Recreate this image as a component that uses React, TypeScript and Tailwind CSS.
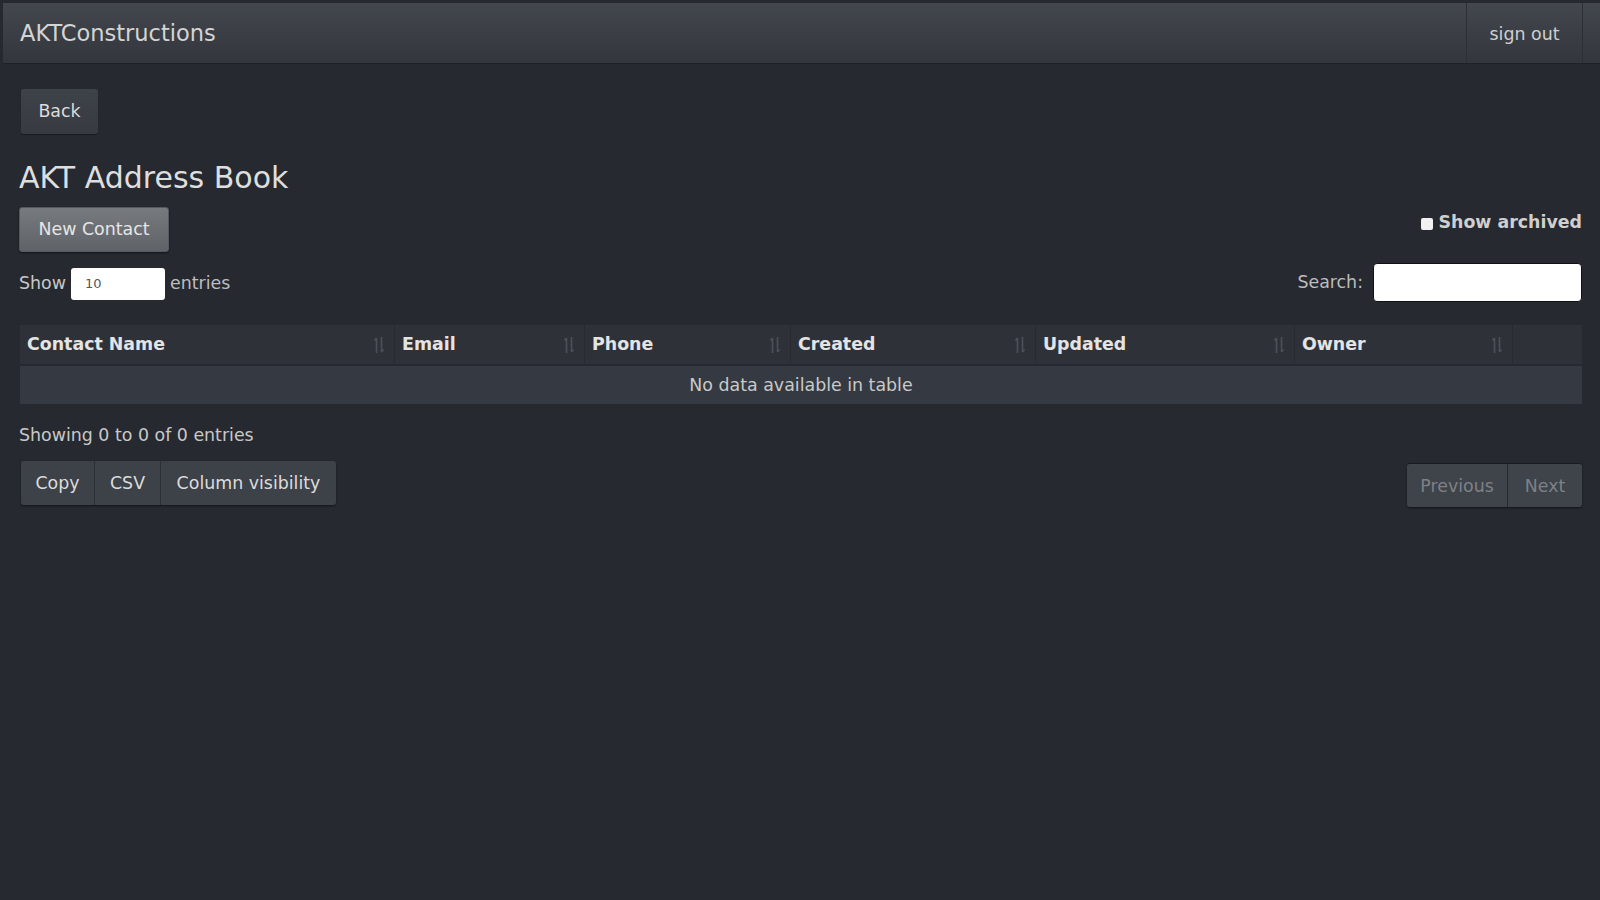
import React from "react";

const font = { fontFamily: '"DejaVu Sans", "Liberation Sans", sans-serif' };

const columns = [
  { label: "Contact Name", width: "w-[375px]" },
  { label: "Email", width: "w-[190px]" },
  { label: "Phone", width: "w-[206px]" },
  { label: "Created", width: "w-[245px]" },
  { label: "Updated", width: "w-[259px]" },
  { label: "Owner", width: "w-[218px]" },
];

function SortIcon() {
  return (
    <svg width="12" height="18" viewBox="0 0 12 18" className="shrink-0">
      <path d="M3.5 17V2M1.5 4.5L3.5 2" stroke="#4b5058" strokeWidth="1.6" fill="none" />
      <path d="M8.5 1v15M10.5 13.5L8.5 16" stroke="#4b5058" strokeWidth="1.6" fill="none" />
    </svg>
  );
}

export default function App() {
  return (
    <div className="min-h-screen bg-[#262930] text-[17.4px] text-[#d9d9d9]" style={font}>
      {/* navbar */}
      <div className="pl-[3px] pt-[3px]">
        <div className="flex h-[61px] items-stretch justify-between border-b border-[#1e2126] bg-gradient-to-b from-[#43474e] to-[#33363c]">
          <div className="flex items-center pl-[17px] pt-[2px] text-[22.5px] text-[#d4d4d4]">AKTConstructions</div>
          <div className="flex items-stretch pr-[17px]">
            <div className="flex w-[117px] items-center justify-center border-x border-[#2c2f35] pt-[2px] text-[#cfcfcf]">
              sign out
            </div>
          </div>
        </div>
      </div>

      {/* content */}
      <div className="pl-[19px] pr-[18px]">
        <div className="pt-[25px]">
          <button className="ml-[2px] h-[45px] w-[77px] rounded-[3px] bg-gradient-to-b from-[#3e4249] to-[#373a41] text-[#dcdcdc] shadow-[0_1px_1px_rgba(0,0,0,0.4)]">
            Back
          </button>
        </div>

        <h1 className="mt-[26px] text-[30px] leading-[36px] text-[#dedede]">AKT Address Book</h1>

        <div className="mt-[11px] flex items-start justify-between">
          <button className="h-[45px] w-[150px] rounded-[3px] border border-[#555a60] bg-gradient-to-b from-[#777b80] to-[#5f6368] text-[#e6e6e6] shadow-[0_1px_2px_rgba(0,0,0,0.5)]">
            New Contact
          </button>
          <label className="mt-[2px] flex items-center gap-[5px] font-bold text-[#cfcfcf]">
            <span className="mt-[3px] block h-[12px] w-[12px] rounded-[2px] bg-[#f2f2f2]" />
            Show archived
          </label>
        </div>

        <div className="mt-[11px] flex items-center justify-between">
          <div className="flex items-center gap-[5px] pt-[2px]">
            <span className="text-[#c8c8c8]">Show</span>
            <div className="flex h-[32px] w-[94px] items-center rounded-[3px] bg-white pl-[14px] text-[13px] text-[#555]">10</div>
            <span className="text-[#bdbdbd]">entries</span>
          </div>
          <div className="flex items-center gap-[10px]">
            <span className="text-[#bcbcbc]">Search:</span>
            <div className="h-[39px] w-[209px] rounded-[4px] border border-[#111] bg-white" />
          </div>
        </div>

        {/* table */}
        <div className="mt-[23px] ml-[1px]">
          <div className="flex h-[39px] bg-[#2e3238]">
            {columns.map((c) => (
              <div
                key={c.label}
                className={`${c.width} flex items-center justify-between border-r border-[#272a30] pl-[7px] pr-[9px] font-bold text-[#e4e4e4]`}
              >
                <span>{c.label}</span>
                <SortIcon />
              </div>
            ))}
            <div className="flex-1" />
          </div>
          <div className="mt-[2px] flex h-[38px] items-center justify-center bg-[#353a42] text-[#c9c9c9]">
            No data available in table
          </div>
        </div>

        <div className="mt-[18px] text-[#c8c8c8]">Showing 0 to 0 of 0 entries</div>

        <div className="mt-[13px] flex items-start justify-between">
          <div className="ml-[2px] flex h-[44px] overflow-hidden rounded-[3px] shadow-[0_1px_2px_rgba(0,0,0,0.5)]">
            <button className="w-[74px] border-r border-[#2c2f35] bg-[#3d4148] text-[#dcdcdc]">Copy</button>
            <button className="w-[66px] border-r border-[#2c2f35] bg-[#3d4148] text-[#dcdcdc]">CSV</button>
            <button className="w-[175px] bg-[#3d4148] text-[#dcdcdc]">Column visibility</button>
          </div>
          <div className="mt-[2px] flex h-[44px] overflow-hidden rounded-[3px] border-t border-[#1a1c20] shadow-[0_1px_2px_rgba(0,0,0,0.5)]">
            <button className="w-[101px] border-r border-[#26292e] bg-[#3f434a] text-[#7d8187]">Previous</button>
            <button className="w-[74px] bg-[#3f434a] text-[#7d8187]">Next</button>
          </div>
        </div>
      </div>
    </div>
  );
}
